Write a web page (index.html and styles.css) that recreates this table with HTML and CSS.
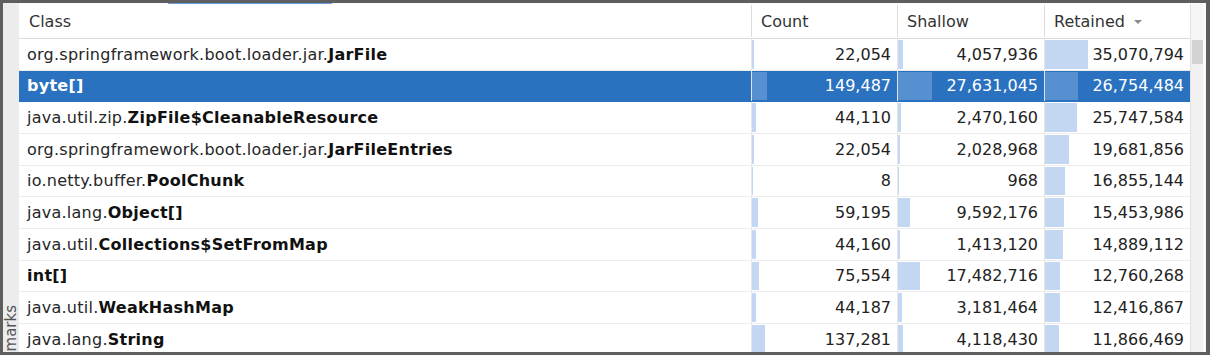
FILE: index.html
```html
<!DOCTYPE html>
<html>
<head>
<meta charset="utf-8">
<link rel="stylesheet" href="styles.css">
</head>
<body>
<div class="frame">
  <div class="side"><span class="side-label">marks</span></div>
  <div class="main">
    <div class="topline"><span class="tab-indicator"></span></div>
    <div class="body">
      <div class="table">
        <div class="row head">
          <div class="cell cls">Class</div>
          <div class="cell hnum">Count</div>
          <div class="cell hnum">Shallow</div>
          <div class="cell hnum">Retained <span class="sort"></span></div>
        </div>
        <div class="row">
          <div class="cell cls">org.springframework.boot.loader.jar.<b>JarFile</b></div>
          <div class="cell num"><span class="bar" style="width:2px"></span><span class="val">22,054</span></div>
          <div class="cell num"><span class="bar" style="width:5px"></span><span class="val">4,057,936</span></div>
          <div class="cell num"><span class="bar" style="width:43px"></span><span class="val">35,070,794</span></div>
        </div>
        <div class="row sel">
          <div class="cell cls"><b>byte[]</b></div>
          <div class="cell num"><span class="bar" style="width:15px"></span><span class="val">149,487</span></div>
          <div class="cell num"><span class="bar" style="width:34px"></span><span class="val">27,631,045</span></div>
          <div class="cell num"><span class="bar" style="width:33px"></span><span class="val">26,754,484</span></div>
        </div>
        <div class="row">
          <div class="cell cls">java.util.zip.<b>ZipFile$CleanableResource</b></div>
          <div class="cell num"><span class="bar" style="width:4px"></span><span class="val">44,110</span></div>
          <div class="cell num"><span class="bar" style="width:3px"></span><span class="val">2,470,160</span></div>
          <div class="cell num"><span class="bar" style="width:32px"></span><span class="val">25,747,584</span></div>
        </div>
        <div class="row">
          <div class="cell cls">org.springframework.boot.loader.jar.<b>JarFileEntries</b></div>
          <div class="cell num"><span class="bar" style="width:2px"></span><span class="val">22,054</span></div>
          <div class="cell num"><span class="bar" style="width:2px"></span><span class="val">2,028,968</span></div>
          <div class="cell num"><span class="bar" style="width:24px"></span><span class="val">19,681,856</span></div>
        </div>
        <div class="row">
          <div class="cell cls">io.netty.buffer.<b>PoolChunk</b></div>
          <div class="cell num"><span class="bar" style="width:1px"></span><span class="val">8</span></div>
          <div class="cell num"><span class="bar" style="width:1px"></span><span class="val">968</span></div>
          <div class="cell num"><span class="bar" style="width:20px"></span><span class="val">16,855,144</span></div>
        </div>
        <div class="row">
          <div class="cell cls">java.lang.<b>Object[]</b></div>
          <div class="cell num"><span class="bar" style="width:6px"></span><span class="val">59,195</span></div>
          <div class="cell num"><span class="bar" style="width:12px"></span><span class="val">9,592,176</span></div>
          <div class="cell num"><span class="bar" style="width:19px"></span><span class="val">15,453,986</span></div>
        </div>
        <div class="row">
          <div class="cell cls">java.util.<b>Collections$SetFromMap</b></div>
          <div class="cell num"><span class="bar" style="width:4px"></span><span class="val">44,160</span></div>
          <div class="cell num"><span class="bar" style="width:2px"></span><span class="val">1,413,120</span></div>
          <div class="cell num"><span class="bar" style="width:18px"></span><span class="val">14,889,112</span></div>
        </div>
        <div class="row">
          <div class="cell cls"><b>int[]</b></div>
          <div class="cell num"><span class="bar" style="width:7px"></span><span class="val">75,554</span></div>
          <div class="cell num"><span class="bar" style="width:22px"></span><span class="val">17,482,716</span></div>
          <div class="cell num"><span class="bar" style="width:15px"></span><span class="val">12,760,268</span></div>
        </div>
        <div class="row">
          <div class="cell cls">java.util.<b>WeakHashMap</b></div>
          <div class="cell num"><span class="bar" style="width:4px"></span><span class="val">44,187</span></div>
          <div class="cell num"><span class="bar" style="width:4px"></span><span class="val">3,181,464</span></div>
          <div class="cell num"><span class="bar" style="width:15px"></span><span class="val">12,416,867</span></div>
        </div>
        <div class="row">
          <div class="cell cls">java.lang.<b>String</b></div>
          <div class="cell num"><span class="bar" style="width:13px"></span><span class="val">137,281</span></div>
          <div class="cell num"><span class="bar" style="width:5px"></span><span class="val">4,118,430</span></div>
          <div class="cell num"><span class="bar" style="width:14px"></span><span class="val">11,866,469</span></div>
        </div>
      </div>
      <div class="scrollbar">
        <div class="scroll-head"></div>
        <div class="thumb"></div>
      </div>
      <div class="edge"></div>
    </div>
  </div>
</div>
</body>
</html>
```
FILE: styles.css
```css
* { box-sizing: border-box; }
html, body { margin: 0; padding: 0; }
body {
  font-family: "DejaVu Sans", "Liberation Sans", sans-serif;
  font-size: 16px;
  color: #262626;
  background: #ffffff;
}
.frame {
  width: 1210px;
  height: 355px;
  border: 3px solid #5e5e5e;
  border-right-width: 4px;
  display: flex;
  overflow: hidden;
  background: #f4f4f4;
}
.side {
  width: 16px;
  flex: none;
  background: #ececec;
  display: flex;
  flex-direction: column;
  justify-content: flex-end;
  align-items: center;
}
.side-label {
  writing-mode: vertical-rl;
  transform: rotate(180deg);
  font-size: 15px;
  color: #555;
  line-height: 16px;
  margin-bottom: 1px;
  white-space: nowrap;
}
.main {
  flex: 1;
  display: flex;
  flex-direction: column;
  min-width: 0;
}
.topline {
  height: 1px;
  flex: none;
  background: #fbfbfb;
  display: flex;
}
.tab-indicator {
  margin-left: 149px;
  width: 164px;
  height: 1px;
  background: #6d9ddb;
}
.body {
  flex: 1;
  display: flex;
  min-height: 0;
}
.table {
  width: 1171px;
  flex: none;
  background: #fff;
  overflow: hidden;
}
.row {
  display: grid;
  grid-template-columns: 732px 146px 147px 146px;
  height: 31.667px;
  border-bottom: 1px solid #ececec;
}
.row.head {
  height: 35px;
  border-bottom: 1px solid #dadada;
}
.cell {
  display: flex;
  align-items: center;
  min-width: 0;
  white-space: nowrap;
  overflow: hidden;
}
.cell + .cell {
  border-left: 1px solid #e8e8e8;
}
.head .cell + .cell {
  border-left-color: #dcdcdc;
  margin: 1px 0 1px;
}
.cls {
  padding-left: 8px;
  color: #262626;
  letter-spacing: 0.25px;
}
.cls b {
  font-weight: bold;
  color: #111;
}
.head .cls {
  padding-left: 10px;
  color: #333;
  letter-spacing: 0;
}
.hnum {
  padding-left: 9px;
  color: #333;
}
.sort {
  width: 0;
  height: 0;
  border-left: 4px solid transparent;
  border-right: 4px solid transparent;
  border-top: 4px solid #8a8a8a;
  margin-left: 9px;
  margin-top: 2px;
}
.num {
  display: grid;
  grid-template-columns: 1fr;
  grid-template-rows: 1fr;
}
.bar {
  grid-area: 1 / 1;
  justify-self: start;
  align-self: stretch;
  margin: 1px 0 1px;
  background: #c3d7f3;
}
.val {
  grid-area: 1 / 1;
  justify-self: end;
  align-self: center;
  padding-right: 6px;
  color: #222;
}
.row.sel {
  background: #2a72c0;
  border-bottom-color: #2a72c0;
}
.row.sel .cell,
.row.sel .cls b,
.row.sel .val {
  color: #ffffff;
}
.row.sel .cell + .cell {
  border-left-color: #d8e4f2;
}
.row.sel .bar {
  background: #5690d0;
}
.scrollbar {
  width: 13px;
  flex: none;
  background: #f1f1f1;
  border-left: 1px solid #e2e2e2;
  display: flex;
  flex-direction: column;
  align-items: flex-end;
}
.scroll-head {
  height: 36px;
  width: 100%;
  background: #f6f6f6;
}
.thumb {
  width: 11px;
  height: 24px;
  background: #d3d3d3;
}
.edge {
  width: 3px;
  flex: none;
  background: #fafafa;
}
```
